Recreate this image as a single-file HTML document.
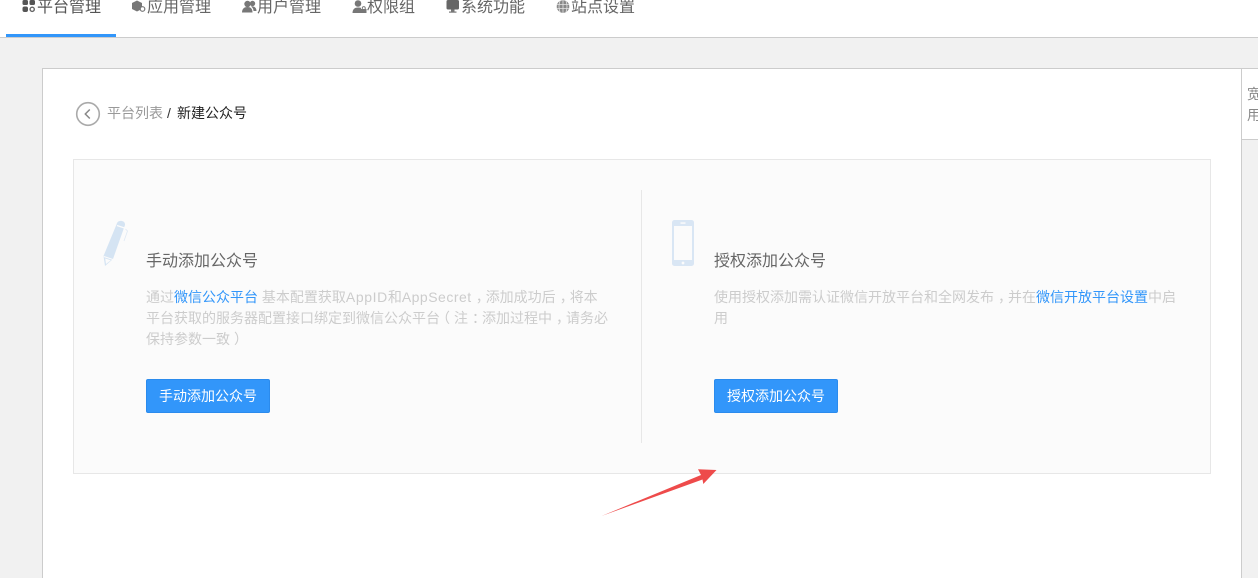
<!DOCTYPE html>
<html lang="zh">
<head>
<meta charset="utf-8">
<title>新建公众号</title>
<style>
html,body{margin:0;padding:0;width:1258px;height:578px;overflow:hidden}
body{background:#f1f1f1;font-family:"Liberation Sans","Noto Sans CJK SC",sans-serif;color:#666}
#w{position:relative;width:1258px;height:578px;overflow:hidden;background:#f1f1f1}
.a{position:absolute;white-space:nowrap}
.nav{left:0;top:0;width:1258px;height:37px;background:#fff;border-bottom:1px solid #ccc}
.ni{font-size:16px;line-height:20px;top:-2px;color:#666}
.ic{position:absolute}
.panel{left:42px;top:68px;width:1198px;height:509px;background:#fff;border:1px solid #ccc;border-bottom:none}
.box{left:73px;top:159px;width:1136px;height:313px;background:#fbfbfb;border:1px solid #e7e7e7}
.t{font-size:16px;line-height:22px;color:#666}
.d{font-size:14px;line-height:21px;color:#ccc}
.d span{color:#3296fa}
.d i{font-style:normal;position:relative;left:4px}
.d i.o{left:-4px}
.d b{font-weight:normal}
.btn{width:122px;height:32px;line-height:32px;text-align:center;background:#3296fa;border:1px solid #2b8bed;border-radius:2px;color:#fff;font-size:14px}
</style>
</head>
<body>
<div id="w">
<div class="a nav"></div>
<div class="a" style="left:6px;top:34px;width:110px;height:3px;background:#3296fa"></div>

<svg class="ic" style="left:22px;top:0" width="14" height="13" viewBox="0 0 14 13"><rect x="0.5" y="0" width="5.5" height="5" rx="1.5" fill="#555"/><rect x="7.5" y="0" width="5.5" height="5" rx="1.5" fill="#555"/><rect x="0.5" y="6.5" width="5.5" height="5.5" rx="2" fill="#555"/><circle cx="10.2" cy="9.3" r="2.1" fill="none" stroke="#666" stroke-width="1.4"/></svg>
<div class="a ni" style="left:37px;color:#555">平台管理</div>

<svg class="ic" style="left:132px;top:0" width="15" height="13" viewBox="0 0 15 13"><path d="M0 3L5 0.5 10 3V9L5 11.5 0 9Z" fill="#777"/><circle cx="10.5" cy="9" r="2.3" fill="#fff" stroke="#777" stroke-width="1.2"/></svg>
<div class="a ni" style="left:147px">应用管理</div>

<svg class="ic" style="left:242px;top:0" width="15" height="13" viewBox="0 0 15 13"><circle cx="5.5" cy="4" r="3.2" fill="#777"/><path d="M0 12.5C0 8.5 2.5 7 5.5 7S10.5 8.5 10.5 12.5Z" fill="#777"/><circle cx="10.5" cy="3.5" r="2.7" fill="#777"/><path d="M9 6.5C12 6 14.5 7.5 14.5 11H11.5C11.5 9 10.5 7.5 9 6.5Z" fill="#777"/></svg>
<div class="a ni" style="left:257px">用户管理</div>

<svg class="ic" style="left:352px;top:0" width="15" height="14" viewBox="0 0 15 14"><circle cx="6" cy="3.5" r="3.3" fill="#777"/><path d="M0.5 13C0.5 9 3 7.5 6 7.5S9 8 9 8V13Z" fill="#777"/><rect x="9" y="9" width="5.5" height="4" fill="#777"/><path d="M10.3 9V7.8A1.5 1.5 0 0 1 13.2 7.8V9" fill="none" stroke="#777"/></svg>
<div class="a ni" style="left:367px">权限组</div>

<svg class="ic" style="left:446px;top:0" width="14" height="14" viewBox="0 0 14 14"><rect x="0.5" y="0" width="12.5" height="9.5" rx="1.5" fill="#666"/><rect x="5" y="9.5" width="3.5" height="2" fill="#777"/><rect x="3" y="11.5" width="7.5" height="1.2" fill="#777"/></svg>
<div class="a ni" style="left:461px">系统功能</div>

<svg class="ic" style="left:556px;top:0" width="15" height="14" viewBox="0 0 15 14"><circle cx="7" cy="6.5" r="6.3" fill="#888"/><path d="M0.7 4.5H13.3M0.7 8.5H13.3M7 0.2V12.8M4 0.9C2.7 4.5 2.7 8.5 4 12.1M10 0.9C11.3 4.5 11.3 8.5 10 12.1" fill="none" stroke="#e4e4e4" stroke-width="0.8"/></svg>
<div class="a ni" style="left:571px">站点设置</div>

<div class="a panel"></div>
<div class="a" style="left:1242px;top:68px;width:16px;height:70px;background:#fff;border-top:1px solid #ccc;border-bottom:1px solid #ccc;overflow:hidden">
  <div class="a" style="left:5px;top:15px;font-size:14px;line-height:21px;color:#888;white-space:normal;width:14px">宽用</div>
</div>

<svg class="ic" style="left:75px;top:101px" width="26" height="26" viewBox="0 0 26 26"><circle cx="13" cy="13" r="11.3" fill="none" stroke="#aaa" stroke-width="1.6"/><path d="M14.8 8.5L10.3 13 14.8 17.5" fill="none" stroke="#888" stroke-width="1.5"/></svg>
<div class="a" style="left:107px;top:103px;font-size:14px;line-height:20px;color:#999">平台列表</div>
<div class="a" style="left:167px;top:103px;font-size:14px;line-height:20px;color:#333">/</div>
<div class="a" style="left:177px;top:103px;font-size:14px;line-height:20px;color:#222">新建公众号</div>

<div class="a box"></div>
<div class="a" style="left:641px;top:190px;width:1px;height:253px;background:#e7e7e7"></div>

<svg class="ic" style="left:103px;top:219px" width="25" height="48" viewBox="0 0 25 48"><path d="M13.7 5C14.5 0.5 22.5 1 22 6L10 40 2 47 0.5 37Z" fill="#d5e4f3"/><path d="M14 6.5L21.5 9" stroke="#fbfbfb" stroke-width="1.2"/><path d="M0.8 37.5L10 40.5" stroke="#fbfbfb" stroke-width="1"/><path d="M2.2 39.5L7.8 41.2 3 45Z" fill="#fbfbfb"/><path d="M22.5 10L24.5 12 21 22" fill="none" stroke="#dfe9f4" stroke-width="0.8"/></svg>
<div class="a t" style="left:146px;top:251px">手动添加公众号</div>
<div class="a d" style="left:146px;top:287px">通过<span>微信公众平台</span> 基本配置获取<b style="letter-spacing:.6px">AppID</b>和<b style="letter-spacing:.5px">AppSecret</b><i>，</i>添加成功后<i>，</i>将本</div>
<div class="a d" style="left:146px;top:308px">平台获取的服务器配置接口绑定到微信公众平台<i class="o">（</i>注<i>：</i>添加过程中<i>，</i>请务必</div>
<div class="a d" style="left:146px;top:329px">保持参数一致<i>）</i></div>
<div class="a btn" style="left:146px;top:379px">手动添加公众号</div>

<svg class="ic" style="left:672px;top:220px" width="22" height="46" viewBox="0 0 22 46"><rect x="0" y="0" width="22" height="46" rx="2.5" fill="#d9e6f4"/><rect x="2" y="6" width="18" height="34" fill="#fbfbfb"/><rect x="8.5" y="2.3" width="5" height="1.5" fill="#fbfbfb"/><circle cx="11" cy="43" r="1.4" fill="#fbfbfb"/></svg>
<div class="a t" style="left:714px;top:251px">授权添加公众号</div>
<div class="a d" style="left:714px;top:287px">使用授权添加需认证微信开放平台和全网发布<i>，</i>并在<span>微信开放平台设置</span>中启</div>
<div class="a d" style="left:714px;top:308px">用</div>
<div class="a btn" style="left:714px;top:379px">授权添加公众号</div>

<svg class="ic" style="left:0;top:0" width="1258" height="578" viewBox="0 0 1258 578"><path d="M601.5 516L701 475 698 469.3 716.5 470 703.3 484 702.5 479.5Z" fill="#ee4b4b"/></svg>
</div>
</body>
</html>
